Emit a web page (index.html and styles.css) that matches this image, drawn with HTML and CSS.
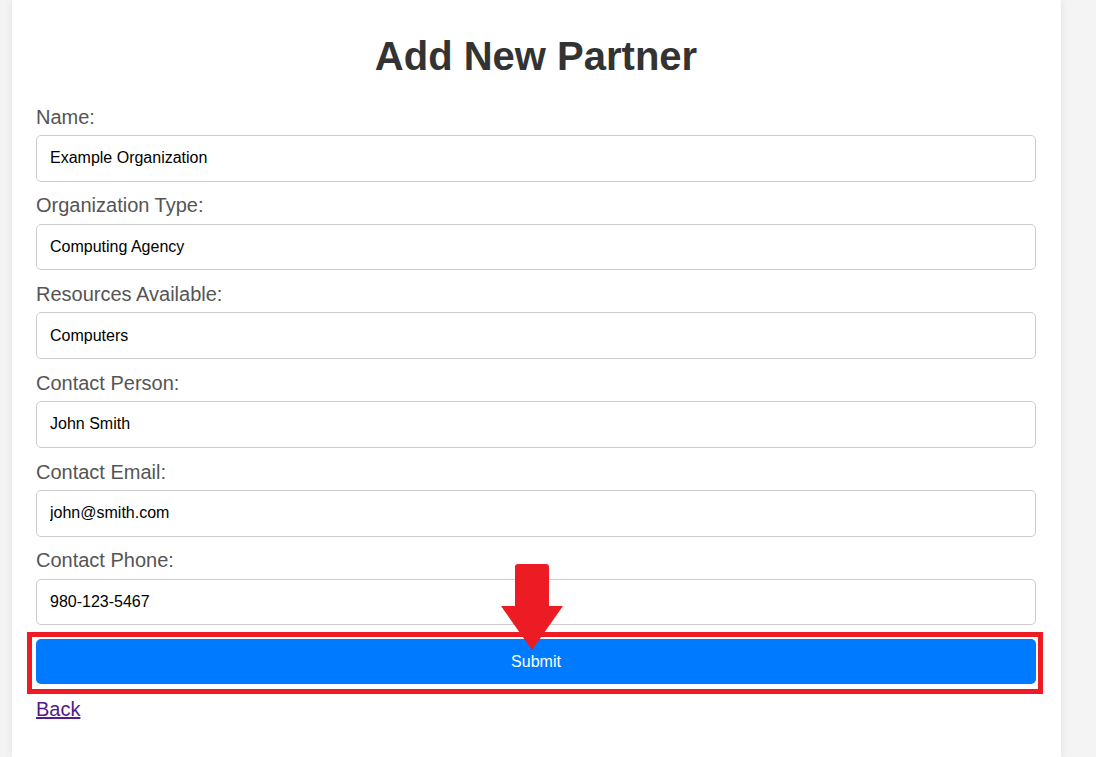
FILE: index.html
```html
<!DOCTYPE html>
<html lang="en">
<head>
<meta charset="utf-8">
<title>Add New Partner</title>
<link rel="stylesheet" href="styles.css">
</head>
<body>
<div class="container">
  <h1 class="title">Add New Partner</h1>
  <form class="form">
    <label class="label" for="name">Name:</label>
    <input class="field" id="name" type="text" value="Example Organization">
    <label class="label" for="type">Organization Type:</label>
    <input class="field" id="type" type="text" value="Computing Agency">
    <label class="label" for="res">Resources Available:</label>
    <input class="field" id="res" type="text" value="Computers">
    <label class="label" for="person">Contact Person:</label>
    <input class="field" id="person" type="text" value="John Smith">
    <label class="label" for="email">Contact Email:</label>
    <input class="field" id="email" type="text" value="john@smith.com">
    <label class="label" for="phone">Contact Phone:</label>
    <input class="field" id="phone" type="text" value="980-123-5467">
    <div class="submit-wrap">
      <button class="submit" type="button">Submit</button>
      <div class="highlight"></div>
      <svg class="arrow" width="62" height="86" viewBox="0 0 62 86">
        <path d="M17 0 H45 Q48 0 48 3 V42 H62 L31 86 L0 42 H14 V3 Q14 0 17 0 Z" fill="#ed1c24"/>
      </svg>
    </div>
  </form>
  <a class="back" href="#">Back</a>
</div>
</body>
</html>
```
FILE: styles.css
```css
html, body {
  margin: 0;
  padding: 0;
}
body {
  background: #f4f4f4;
  font-family: "Liberation Sans", Arial, sans-serif;
  height: 757px;
  overflow: hidden;
}
.container {
  box-sizing: border-box;
  width: 1049px;
  margin-left: 12px;
  min-height: 757px;
  background: #fff;
  padding: 6px 25px 0 24px;
  box-shadow: 0 0 8px rgba(0, 0, 0, 0.08);
}
.title {
  font-size: 40px;
  font-weight: bold;
  color: #333;
  text-align: center;
  margin: 26.8px 0;
  line-height: 46px;
}
.form {
  display: flex;
  flex-direction: column;
}
.label {
  display: block;
  font-size: 20px;
  line-height: 23px;
  color: #555;
  margin-bottom: 6.4px;
}
.field {
  box-sizing: border-box;
  width: 1000px;
  height: 46.6px;
  margin: 0 0 12.75px 0;
  padding: 0 13px;
  border: 1px solid #ccc;
  border-radius: 5px;
  font-family: "Liberation Sans", Arial, sans-serif;
  font-size: 16px;
  color: #000;
  background: #fff;
  outline: none;
}
.submit-wrap {
  position: relative;
  margin-top: 1.2px;
  margin-bottom: 14px;
}
.submit {
  display: block;
  width: 1000px;
  height: 45px;
  border: none;
  border-radius: 5px;
  background: #007bff;
  color: #fff;
  font-family: "Liberation Sans", Arial, sans-serif;
  font-size: 16px;
  padding: 1px 0 0;
}
.highlight {
  position: absolute;
  left: -9px;
  top: -7px;
  width: 1016px;
  height: 62px;
  box-sizing: border-box;
  border: 5px solid #ed1c24;
}
.arrow {
  position: absolute;
  left: 465px;
  top: -75px;
}
.back {
  display: inline-block;
  font-size: 20px;
  line-height: 23px;
  color: #551a8b;
  text-decoration: underline;
}
```
